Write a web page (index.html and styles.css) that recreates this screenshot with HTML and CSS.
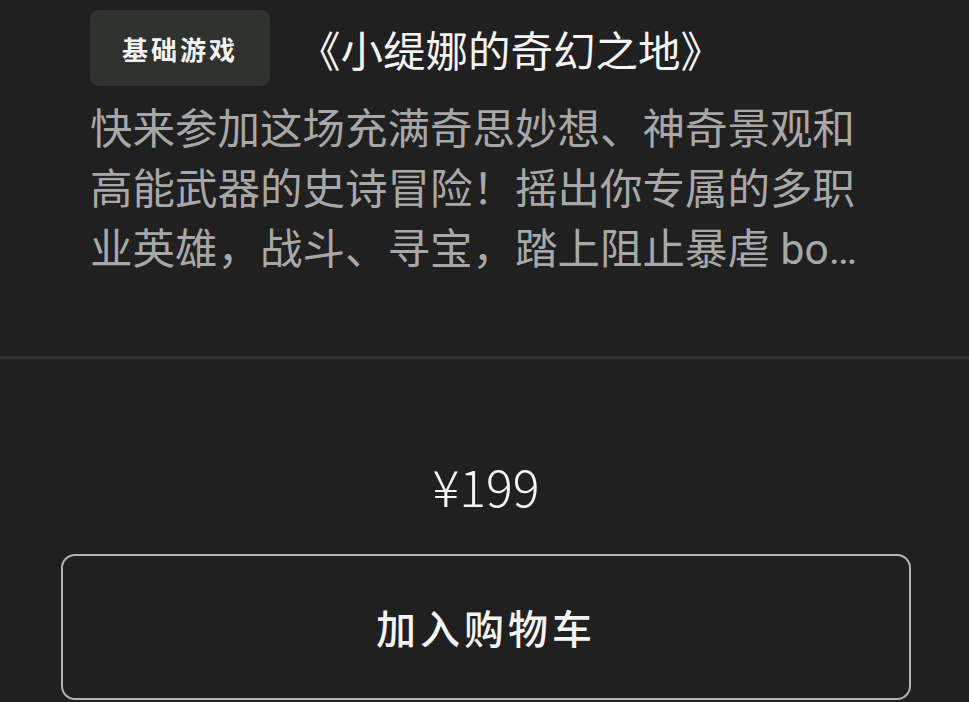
FILE: index.html
```html
<!DOCTYPE html>
<html lang="zh-CN">
<head>
    <meta charset="UTF-8">
    <meta name="viewport" content="width=device-width, initial-scale=1.0">
    <title>小缇娜的奇幻之地</title>
    <link rel="stylesheet" href="styles.css">
</head>
<body>
    <section class="game_info">
        <div class="game_head">
            <span class="game_tag">基础游戏</span>
            <h1 class="game_title">《小缇娜的奇幻之地》</h1>
        </div>
        <p class="game_desc">快来参加这场充满奇思妙想、神奇景观和高能武器的史诗冒险！摇出你专属的多职业英雄，战斗、寻宝，踏上阻止暴虐 boss 龙王的征途，拯救奇幻之地！</p>
    </section>

    <section class="buy_box">
        <div class="price">¥199</div>
        <button type="button" class="cart_button">加入购物车</button>
    </section>
</body>
</html>
```

FILE: styles.css
```css
* {
    box-sizing: border-box;
}

body {
    margin: 0;
    height: 702px;
    overflow: hidden;
    background: #202020;
    font-family: "Noto Sans CJK SC", "Noto Sans", sans-serif;
    color: #f2f2f2;
}

/* 顶部：标签 + 标题 + 简介 */
.game_info {
    padding: 10px 99px 76px 90px;
    border-bottom: 3px solid #343434;
}

.game_head {
    display: flex;
    align-items: center;
    gap: 28px;
}

.game_tag {
    display: inline-flex;
    align-items: center;
    justify-content: center;
    width: 180px;
    height: 76px;
    border-radius: 9px;
    background: #2f322f;
    font-size: 26px;
    font-weight: 700;
    letter-spacing: 3px;
    color: #f4f4f4;
}

.game_title {
    margin: 0;
    font-size: 42.5px;
    font-weight: 400;
    color: #f4f4f4;
}

/* 简介最多三行，超出显示省略号 */
.game_desc {
    margin: 14px 0 0 0;
    font-family: Roboto, "Noto Sans CJK SC", sans-serif;
    font-size: 42.5px;
    line-height: 60px;
    color: #a8a8a8;
    word-break: break-all;
    display: -webkit-box;
    -webkit-box-orient: vertical;
    -webkit-line-clamp: 3;
    overflow: hidden;
}

/* 价格 + 购物车按钮 */
.buy_box {
    display: flex;
    flex-direction: column;
    align-items: center;
    padding: 96px 58px 0 61px;
}

.price {
    font-size: 50px;
    font-weight: 300;
    line-height: 60px;
    color: #f6f6f6;
}

.cart_button {
    margin-top: 39px;
    width: 100%;
    height: 146px;
    border: 2px solid #b3b3b3;
    border-radius: 14px;
    background: transparent;
    color: #f4f4f4;
    font-family: inherit;
    font-size: 40px;
    font-weight: 500;
    letter-spacing: 4px;
    cursor: pointer;
}
```
